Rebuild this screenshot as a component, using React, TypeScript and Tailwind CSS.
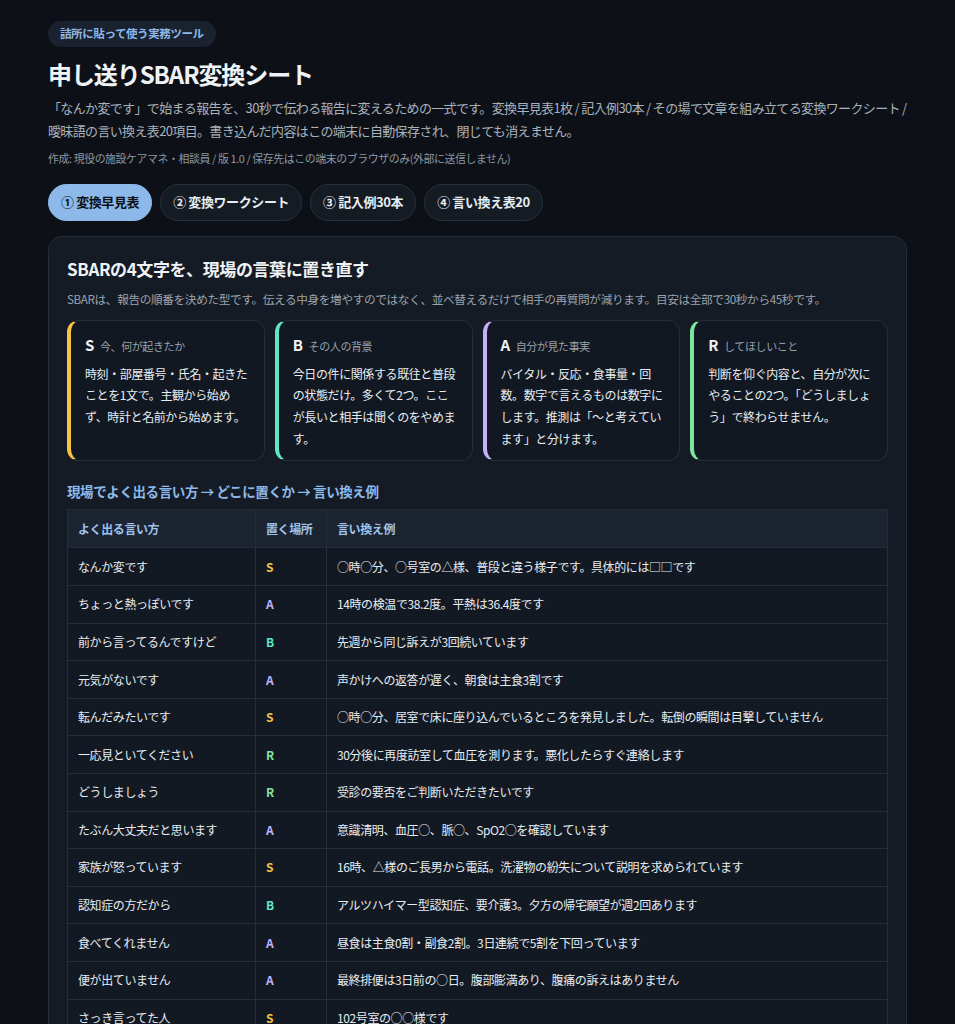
import React from "react";

const cards = [
  { k: "S", sub: "今、何が起きたか", body: "時刻・部屋番号・氏名・起きたことを1文で。主観から始めず、時計と名前から始めます。", border: "border-l-[#f6c343]" },
  { k: "B", sub: "その人の背景", body: "今日の件に関係する既往と普段の状態だけ。多くて2つ。ここが長いと相手は聞くのをやめます。", border: "border-l-[#5ee6c8]" },
  { k: "A", sub: "自分が見た事実", body: "バイタル・反応・食事量・回数。数字で言えるものは数字にします。推測は「〜と考えています」と分けます。", border: "border-l-[#c3b1fa]" },
  { k: "R", sub: "してほしいこと", body: "判断を仰ぐ内容と、自分が次にやることの2つ。「どうしましょう」で終わらせません。", border: "border-l-[#7fe3a0]" },
];

const letterColor: Record<string, string> = {
  S: "text-[#f6c343]",
  B: "text-[#5ee6c8]",
  A: "text-[#c3b1fa]",
  R: "text-[#7fe3a0]",
};

const rows: [string, string, string][] = [
  ["なんか変です", "S", "○時○分、○号室の△様、普段と違う様子です。具体的には□□です"],
  ["ちょっと熱っぽいです", "A", "14時の検温で38.2度。平熱は36.4度です"],
  ["前から言ってるんですけど", "B", "先週から同じ訴えが3回続いています"],
  ["元気がないです", "A", "声かけへの返答が遅く、朝食は主食3割です"],
  ["転んだみたいです", "S", "○時○分、居室で床に座り込んでいるところを発見しました。転倒の瞬間は目撃していません"],
  ["一応見といてください", "R", "30分後に再度訪室して血圧を測ります。悪化したらすぐ連絡します"],
  ["どうしましょう", "R", "受診の要否をご判断いただきたいです"],
  ["たぶん大丈夫だと思います", "A", "意識清明、血圧○、脈○、SpO2○を確認しています"],
  ["家族が怒っています", "S", "16時、△様のご長男から電話。洗濯物の紛失について説明を求められています"],
  ["認知症の方だから", "B", "アルツハイマー型認知症、要介護3。夕方の帰宅願望が週2回あります"],
  ["食べてくれません", "A", "昼食は主食0割・副食2割。3日連続で5割を下回っています"],
  ["便が出ていません", "A", "最終排便は3日前の○日。腹部膨満あり、腹痛の訴えはありません"],
  ["さっき言ってた人", "S", "102号室の○○様です"],
  ["いつもと違う感じです", "A", "普段は自力で立ち上がれますが、今朝は介助が必要でした"],
];

const tabBase = "h-[37px] rounded-full border px-[12px] text-[13px] font-bold";

export default function App() {
  return (
    <div className="min-h-screen bg-[#0d1117] text-[#e6edf3] tracking-[-0.025em] [font-family:'Noto_Sans_CJK_JP','Noto_Sans',sans-serif]">
      <div className="px-12 pt-[19px] pb-10">
        <span className="inline-flex h-[26px] items-center rounded-full bg-[#1a2230] px-3 text-[11.5px] font-bold text-[#8cb9ea]">
          詰所に貼って使う実務ツール
        </span>
        <h1 className="mt-[9px] text-[24px] font-bold leading-[36px] tracking-[-0.045em] text-[#f0f3f6]">申し送りSBAR変換シート</h1>
        <p className="mt-[4px] text-[13px] leading-[23px] tracking-[-0.05em] text-[#a8b1bc]">
          「なんか変です」で始まる報告を、30秒で伝わる報告に変えるための一式です。変換早見表1枚 / 記入例30本 / その場で文章を組み立てる変換ワークシート / 曖昧語の言い換え表20項目。書き込んだ内容はこの端末に自動保存され、閉じても消えません。
        </p>
        <p className="mt-[7px] text-[10.9px] leading-[18px] text-[#8d96a0]">
          作成: 現役の施設ケアマネ・相談員 / 版 1.0 / 保存先はこの端末のブラウザのみ(外部に送信しません)
        </p>
        <div className="mt-[17px] flex gap-2">
          <button className={`${tabBase} border-[#8cb9ea] bg-[#8cb9ea] text-[#0d1117]`}>① 変換早見表</button>
          <button className={`${tabBase} border-[#2a313b] bg-[#151b23] text-[#e6edf3]`}>② 変換ワークシート</button>
          <button className={`${tabBase} border-[#2a313b] bg-[#151b23] text-[#e6edf3]`}>③ 記入例30本</button>
          <button className={`${tabBase} border-[#2a313b] bg-[#151b23] text-[#e6edf3]`}>④ 言い換え表20</button>
        </div>

        <section className="mt-[15px] rounded-[14px] border border-[#262d37] bg-[#151b24] px-[18px] pt-[19px] pb-6">
          <h2 className="text-[17px] font-bold leading-[26px] text-[#f0f3f6]">SBARの4文字を、現場の言葉に置き直す</h2>
          <p className="mt-[7px] text-[11.7px] leading-[20px] text-[#9aa3ad]">
            SBARは、報告の順番を決めた型です。伝える中身を増やすのではなく、並べ替えるだけで相手の再質問が減ります。目安は全部で30秒から45秒です。
          </p>
          <div className="mt-[11px] grid grid-cols-4 gap-[10px]">
            {cards.map((c) => (
              <div key={c.k} className={`rounded-[12px] border border-[#262d37] border-l-4 ${c.border} bg-[#121821] pl-[14px] pr-[12px] pt-[12px] pb-[11px]`}>
                <div className="flex items-baseline gap-[6px]">
                  <span className="text-[15px] font-bold leading-[24px] text-[#f0f3f6]">{c.k}</span>
                  <span className="text-[11px] text-[#98a1ab]">{c.sub}</span>
                </div>
                <p className="mt-[6px] text-[12px] leading-[21.7px] text-[#e6edf3]">{c.body}</p>
              </div>
            ))}
          </div>

          <h3 className="mt-[19px] text-[13.5px] font-bold leading-[22px] text-[#8cb9ea]">現場でよく出る言い方 → どこに置くか → 言い換え例</h3>
          <table className="mt-[7px] w-full border-collapse text-[12px]">
            <thead>
              <tr className="bg-[#1c2431]">
                <th className="h-[38px] w-[188px] border border-[#262d37] px-[10px] text-left font-bold text-[#9fc3ec]">よく出る言い方</th>
                <th className="h-[38px] w-[71px] border border-[#262d37] px-[10px] text-left font-bold text-[#9fc3ec]">置く場所</th>
                <th className="h-[38px] border border-[#262d37] px-[10px] text-left font-bold text-[#9fc3ec]">言い換え例</th>
              </tr>
            </thead>
            <tbody>
              {rows.map((r, i) => (
                <tr key={i} className="bg-[#131922]">
                  <td className="h-[37.6px] border border-[#262d37] px-[10px] text-[#e6edf3]">{r[0]}</td>
                  <td className={`h-[37.6px] border border-[#262d37] px-[10px] font-bold ${letterColor[r[1]]}`}>{r[1]}</td>
                  <td className="h-[37.6px] border border-[#262d37] px-[10px] text-[#e6edf3]">{r[2]}</td>
                </tr>
              ))}
            </tbody>
          </table>
        </section>
      </div>
    </div>
  );
}
